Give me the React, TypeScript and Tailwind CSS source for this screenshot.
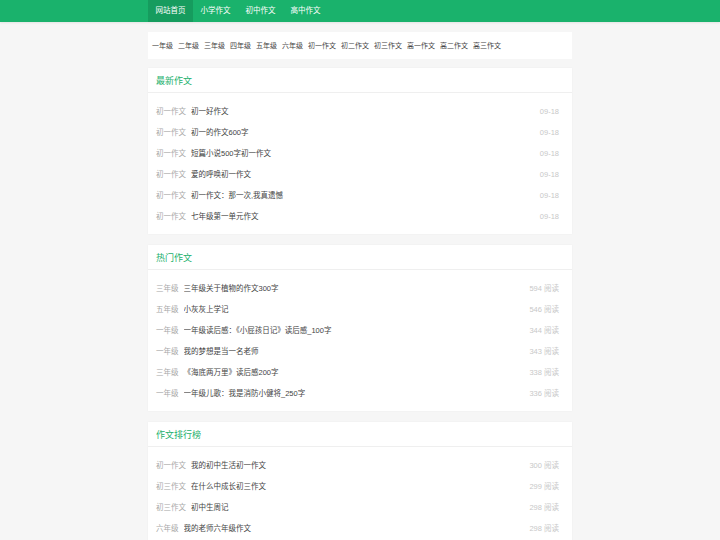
import React from "react";

const navItems = ["网站首页", "小学作文", "初中作文", "高中作文"];
const grades = [
  "一年级",
  "二年级",
  "三年级",
  "四年级",
  "五年级",
  "六年级",
  "初一作文",
  "初二作文",
  "初三作文",
  "高一作文",
  "高二作文",
  "高三作文",
];

type Row = { cat: string; title: string; meta: string };

const latest: Row[] = [
  { cat: "初一作文", title: "初一好作文", meta: "09-18" },
  { cat: "初一作文", title: "初一的作文600字", meta: "09-18" },
  { cat: "初一作文", title: "短篇小说500字初一作文", meta: "09-18" },
  { cat: "初一作文", title: "爱的呼唤初一作文", meta: "09-18" },
  { cat: "初一作文", title: "初一作文：那一次,我真遗憾", meta: "09-18" },
  { cat: "初一作文", title: "七年级第一单元作文", meta: "09-18" },
];

const hot: Row[] = [
  { cat: "三年级", title: "三年级关于植物的作文300字", meta: "594 阅读" },
  { cat: "五年级", title: "小灰灰上学记", meta: "546 阅读" },
  { cat: "一年级", title: "一年级读后感：《小屁孩日记》读后感_100字", meta: "344 阅读" },
  { cat: "一年级", title: "我的梦想是当一名老师", meta: "343 阅读" },
  { cat: "三年级", title: "《海底两万里》读后感200字", meta: "338 阅读" },
  { cat: "一年级", title: "一年级儿歌：我是消防小健将_250字", meta: "336 阅读" },
];

const ranking: Row[] = [
  { cat: "初一作文", title: "我的初中生活初一作文", meta: "300 阅读" },
  { cat: "初三作文", title: "在什么中成长初三作文", meta: "299 阅读" },
  { cat: "初三作文", title: "初中生周记", meta: "298 阅读" },
  { cat: "六年级", title: "我的老师六年级作文", meta: "298 阅读" },
  { cat: "六年级", title: "难忘的一件事六年级作文", meta: "297 阅读" },
  { cat: "初二作文", title: "我的理想初二作文", meta: "296 阅读" },
];

function Section({ title, rows }: { title: string; rows: Row[] }) {
  return (
    <section className="mb-[11px] bg-white shadow-[0_0_2px_rgba(0,0,0,0.04)]">
      <div className="flex h-[25px] items-center border-b border-[#efefef] px-2 pt-[3px]">
        <h2 className="text-[9px] font-normal text-[#1bb06c]">{title}</h2>
      </div>
      <ul className="pb-[7px] pl-2 pr-[13px] pt-2">
        {rows.map((r, i) => (
          <li key={i} className="flex h-[21px] items-center text-[7.5px]">
            <span className="mr-[5px] text-[#a8a8a8]">{r.cat}</span>
            <span className="flex-1 truncate text-[#444]">{r.title}</span>
            <span className="text-[#c8c8c8]">{r.meta}</span>
          </li>
        ))}
      </ul>
    </section>
  );
}

export default function App() {
  return (
    <div
      className="min-h-[540px] bg-[#f6f6f6]"
      style={{ fontFamily: '"Liberation Sans", "Noto Sans CJK SC", sans-serif' }}
    >
      <header className="h-[22px] bg-[#1ab26c] shadow-[0_1px_2px_rgba(0,0,0,0.08)]">
        <nav className="mx-auto flex h-full w-[424px]">
          {navItems.map((n, i) => (
            <a
              key={n}
              href="#"
              className={
                i === 0
                  ? "flex h-full w-[45px] items-center justify-center bg-[#169c5e] text-[7.5px] text-white"
                  : "flex h-full w-[45px] items-center justify-center text-[7.5px] text-white"
              }
            >
              {n}
            </a>
          ))}
        </nav>
      </header>

      <main className="mx-auto w-[424px] pt-[10px]">
        <div className="mb-[9px] flex h-[27px] items-center gap-[5px] bg-white px-1 pt-[2px]">
          {grades.map((g) => (
            <a key={g} href="#" className="text-[7px] text-[#444]">
              {g}
            </a>
          ))}
        </div>

        <Section title="最新作文" rows={latest} />
        <Section title="热门作文" rows={hot} />
        <Section title="作文排行榜" rows={ranking} />
      </main>
    </div>
  );
}
